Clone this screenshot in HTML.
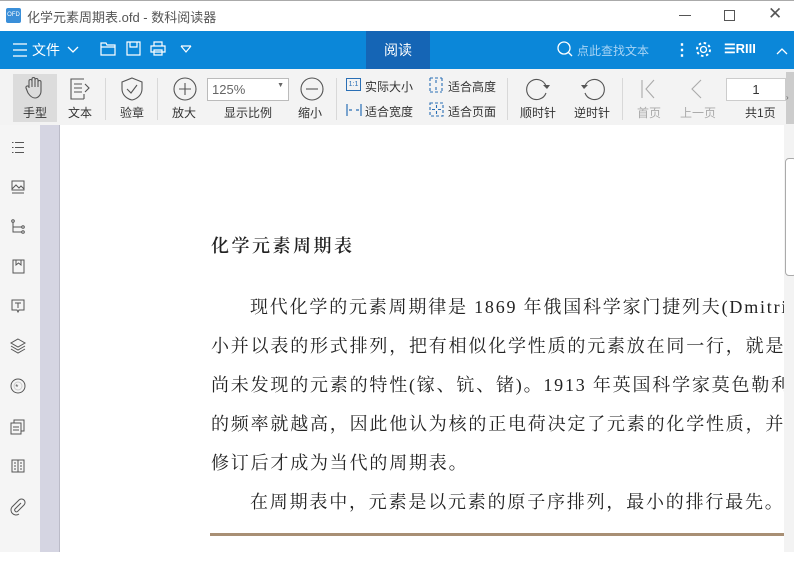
<!DOCTYPE html>
<html><head><meta charset="utf-8"><style>
*{margin:0;padding:0;box-sizing:border-box}
body{width:794px;height:574px;overflow:hidden;background:#fff;font-family:"Liberation Sans","Noto Sans CJK SC",sans-serif;position:relative;color:#333}
.abs{position:absolute}
.title{top:0;left:0;width:794px;height:31px;background:#fff;border-top:1px solid #aaa}
.blue{top:31px;left:0;width:794px;height:38px;background:#0b87d9;color:#fff}
.tb{top:69px;left:0;width:794px;height:56px;background:#f3f3f3}
.lbl{font-size:12px;color:#333;position:absolute;white-space:nowrap}
.sep{position:absolute;top:78px;width:1px;height:42px;background:#d8d8d8}
.side{top:125px;left:0;width:40px;height:427px;background:#f5f5f5}
.lav{top:125px;left:40px;width:20px;height:427px;background:#d5d5e2;border-right:1px solid #bbbbc8}
.page{top:125px;left:61px;width:723px;height:427px;background:#fff;overflow:hidden}
.txt{font-family:"Liberation Serif","Noto Serif CJK SC",serif;font-size:18px;letter-spacing:1.8px;color:#222;white-space:nowrap;position:absolute}
svg{position:absolute;overflow:visible}
</style></head><body>
<div class="abs title">
 <div class="abs" style="left:6px;top:7px;width:15px;height:15px;background:#3a8fd9;border-radius:2px;color:#fff;font-size:6px;line-height:15px;text-align:center">OFD</div>
 <div class="abs" style="left:27px;top:6px;font-size:13px;color:#555">化学元素周期表.ofd - 数科阅读器</div>
 <div class="abs" style="left:679px;top:14px;width:12px;height:1px;background:#555"></div>
 <div class="abs" style="left:724px;top:9px;width:11px;height:11px;border:1px solid #555"></div>
 <div class="abs" style="left:768px;top:3px;font-size:17px;color:#555">✕</div>
</div>
<div class="abs blue">
 <svg style="left:12px;top:12px" width="16" height="14"><path d="M1 1H15M1 7H15M1 13H15" stroke="#fff" stroke-width="1.3"/></svg>
 <div class="abs" style="left:32px;top:9px;font-size:14px">文件</div>
 <svg style="left:67px;top:15px" width="12" height="8"><path d="M1 1L6 6L11 1" stroke="#fff" fill="none" stroke-width="1.3"/></svg>
 <svg style="left:100px;top:10px" width="16" height="15"><path d="M1 2H6L7 4H15V14H1Z M1 6H15" stroke="#fff" fill="none" stroke-width="1.2"/></svg>
 <svg style="left:126px;top:10px" width="15" height="15"><path d="M1 1H14V14H1Z M4 1V6H11V1" stroke="#fff" fill="none" stroke-width="1.2"/></svg>
 <svg style="left:150px;top:10px" width="16" height="15"><path d="M4 5V1H12V5 M1 5H15V11H1Z M4 9H12V14H4Z" stroke="#fff" fill="none" stroke-width="1.2"/></svg>
 <svg style="left:180px;top:14px" width="12" height="9"><path d="M1 1L6 7L11 1 M1 1H11" stroke="#fff" fill="none" stroke-width="1.2"/></svg>
 <div class="abs" style="left:366px;top:0;width:64px;height:38px;background:#1565b5;font-size:14px;text-align:center;line-height:38px">阅读</div>
 <svg style="left:557px;top:10px" width="16" height="16"><circle cx="7" cy="7" r="6" stroke="#fff" fill="none" stroke-width="1.3"/><path d="M11 11L15 15" stroke="#fff" stroke-width="1.3"/></svg>
 <div class="abs" style="left:577px;top:11px;font-size:12px;color:#a8d4f5">点此查找文本</div>
 <div class="abs" style="left:674px;top:9px;font-size:16px;font-weight:bold">⋮</div>
 <svg style="left:695px;top:10px" width="17" height="17"><circle cx="8.5" cy="8.5" r="3" stroke="#fff" fill="none" stroke-width="1.3"/><circle cx="8.5" cy="8.5" r="6.5" stroke="#fff" fill="none" stroke-width="2" stroke-dasharray="2.5 2.6"/></svg>
 <div class="abs" style="left:724px;top:10px;font-size:13px;font-weight:bold">☰RIII</div>
 <svg style="left:776px;top:16px" width="12" height="8"><path d="M1 7L6 2L11 7" stroke="#fff" fill="none" stroke-width="1.3"/></svg>
</div>
<div class="abs tb">
 <div class="abs" style="left:13px;top:5px;width:44px;height:48px;background:#dcdcdc"></div>
</div>
<svg style="left:24px;top:76px" width="22" height="24"><path d="M5 12V5a1.5 1.5 0 013 0V11V3a1.5 1.5 0 013 0V11V4a1.5 1.5 0 013 0V11V6a1.5 1.5 0 013 0V15c0 4-3 7-6 7s-5-2-7-5L2 12a1.5 1.5 0 013-1" stroke="#555" fill="none" stroke-width="1.1"/></svg>
<div class="lbl" style="left:23px;top:104px">手型</div>
<svg style="left:70px;top:78px" width="22" height="22"><path d="M14 1H1V21H14 M14 16V21 M4 6H12M4 10H12M4 14H12 M15 6L19 10L15 14" stroke="#555" fill="none" stroke-width="1.1"/></svg>
<div class="lbl" style="left:68px;top:104px">文本</div>
<div class="sep" style="left:105px"></div>
<svg style="left:121px;top:77px" width="22" height="24"><path d="M11 1L21 5V12C21 18 16 22 11 23C6 22 1 18 1 12V5Z M6 12L10 16L16 8" stroke="#555" fill="none" stroke-width="1.1"/></svg>
<div class="lbl" style="left:120px;top:104px">验章</div>
<div class="sep" style="left:157px"></div>
<svg style="left:173px;top:77px" width="24" height="24"><circle cx="12" cy="12" r="11" stroke="#555" fill="none" stroke-width="1.1"/><path d="M12 6V18M6 12H18" stroke="#555" stroke-width="1.1"/></svg>
<div class="lbl" style="left:172px;top:104px">放大</div>
<div class="abs" style="left:207px;top:78px;width:82px;height:23px;background:#fff;border:1px solid #bbb;font-size:13px;color:#666;padding:3px 0 0 4px">125%<span style="position:absolute;right:4px;top:3px;font-size:7px">▼</span></div>
<div class="lbl" style="left:224px;top:104px">显示比例</div>
<svg style="left:300px;top:77px" width="24" height="24"><circle cx="12" cy="12" r="11" stroke="#555" fill="none" stroke-width="1.1"/><path d="M6 12H18" stroke="#555" stroke-width="1.1"/></svg>
<div class="lbl" style="left:298px;top:104px">缩小</div>
<div class="sep" style="left:336px"></div>
<div class="abs" style="left:346px;top:78px;width:15px;height:13px;border:1px solid #2a6fb5;font-size:7px;color:#2a6fb5;text-align:center;line-height:11px">1:1</div>
<div class="lbl" style="left:365px;top:78px">实际大小</div>
<svg style="left:346px;top:103px" width="16" height="14"><path d="M1 1V13M15 1V13 M3 7H6M10 7H13" stroke="#2a6fb5" stroke-width="1.2" fill="none"/></svg>
<div class="lbl" style="left:365px;top:103px">适合宽度</div>
<svg style="left:429px;top:77px" width="14" height="16"><path d="M1 1H13M1 15H13 M7 3V6M7 10V13 M1 1V15M13 1V15" stroke="#2a6fb5" stroke-width="1.1" fill="none" stroke-dasharray="3 2"/></svg>
<div class="lbl" style="left:448px;top:78px">适合高度</div>
<svg style="left:429px;top:102px" width="15" height="15"><path d="M1 1H14V14H1Z M7.5 3V6M7.5 9V12M3 7.5H6M9 7.5H12" stroke="#2a6fb5" stroke-width="1.1" fill="none" stroke-dasharray="3 2"/></svg>
<div class="lbl" style="left:448px;top:103px">适合页面</div>
<div class="sep" style="left:507px"></div>
<svg style="left:526px;top:77px" width="25" height="24"><path d="M20 9A10 10 0 1 0 20 16" stroke="#555" fill="none" stroke-width="1.1"/><path d="M17 8L21 12L24 8" fill="#555"/></svg>
<div class="lbl" style="left:520px;top:104px">顺时针</div>
<svg style="left:580px;top:77px" width="25" height="24"><path d="M5 9A10 10 0 1 1 5 16" stroke="#555" fill="none" stroke-width="1.1"/><path d="M1 8L4 12L8 8" fill="#555"/></svg>
<div class="lbl" style="left:574px;top:104px">逆时针</div>
<div class="sep" style="left:622px"></div>
<svg style="left:641px;top:79px" width="14" height="20"><path d="M1 1V19 M13 1L5 10L13 19" stroke="#aaa" fill="none" stroke-width="1.1"/></svg>
<div class="lbl" style="left:637px;top:104px;color:#aaa">首页</div>
<svg style="left:690px;top:79px" width="12" height="20"><path d="M11 1L2 10L11 19" stroke="#aaa" fill="none" stroke-width="1.1"/></svg>
<div class="lbl" style="left:680px;top:104px;color:#aaa">上一页</div>
<div class="abs" style="left:726px;top:78px;width:60px;height:23px;background:#fff;border:1px solid #ccc;font-size:13px;text-align:center;line-height:22px">1</div>
<div class="lbl" style="left:745px;top:104px">共1页</div>
<div class="abs" style="left:786px;top:72px;width:8px;height:52px;background:#ccc;font-size:8px;color:#666;line-height:52px">›</div>

<div class="abs side"></div>
<svg style="left:11px;top:141px" width="14" height="13"><path d="M4 1.5H13M4 6.5H13M4 11.5H13" stroke="#555" stroke-width="1"/><path d="M1 1h1.5v1h-1.5zM1 6h1.5v1h-1.5zM1 11h1.5v1h-1.5z" fill="#555"/></svg>
<svg style="left:11px;top:180px" width="14" height="14"><path d="M1 1H13V10H1Z M1 13H13 M1 9L5 5L8 8L10 6L13 9" stroke="#555" fill="none" stroke-width="1"/></svg>
<svg style="left:11px;top:219px" width="14" height="15"><circle cx="2" cy="2" r="1.3" stroke="#555" fill="none"/><path d="M2 3.5V13H11M2 8H11" stroke="#555" fill="none"/><circle cx="12" cy="8" r="1.3" stroke="#555" fill="none"/><circle cx="12" cy="13" r="1.3" stroke="#555" fill="none"/></svg>
<svg style="left:12px;top:259px" width="13" height="15"><path d="M1 1H12V14H1Z M4 1V6L6.5 4L9 6V1" stroke="#555" fill="none"/></svg>
<svg style="left:11px;top:299px" width="14" height="15"><path d="M1 1H13V11H8L7 13L6 11H1Z M4 4H10M7 4V9" stroke="#555" fill="none"/></svg>
<svg style="left:10px;top:338px" width="16" height="16"><path d="M8 1L15 5L8 9L1 5Z M1 8L8 12L15 8 M1 11L8 15L15 11" stroke="#555" fill="none"/></svg>
<svg style="left:10px;top:378px" width="16" height="16"><circle cx="8" cy="8" r="7" stroke="#555" fill="none"/><circle cx="8" cy="8" r="4" stroke="#ccc" fill="none"/><text x="5.2" y="12" font-size="8" fill="#555">*</text></svg>
<svg style="left:10px;top:418px" width="16" height="17"><path d="M1 5H11V16H1Z M4 5V2H14V13H11 M3 9H9M3 12H9" stroke="#555" fill="none"/></svg>
<svg style="left:11px;top:459px" width="14" height="14"><path d="M1 1H13V13H1Z M7 1V13 M3 4H5M3 7H5M3 10H5M9 4H11M9 7H11M9 10H11" stroke="#555" fill="none"/></svg>
<svg style="left:10px;top:498px" width="16" height="16"><path d="M11 5L5 11a1.8 1.8 0 0 0 2.5 2.5L14 7a3.5 3.5 0 0 0-5-5L2 9a5 5 0 0 0 7 7" stroke="#555" fill="none"/></svg>
<div class="abs lav"></div>
<div class="abs page">
 <div class="txt" style="left:150px;top:107px;font-weight:600;font-size:18px;letter-spacing:2.5px">化学元素周期表</div>
 <div class="txt" style="left:189px;top:168px">现代化学的元素周期律是 1869 年俄国科学家门捷列夫(Dmitri</div>
 <div class="txt" style="left:150px;top:207px">小并以表的形式排列，把有相似化学性质的元素放在同一行，就是</div>
 <div class="txt" style="left:150px;top:246px">尚未发现的元素的特性(镓、钪、锗)。1913 年英国科学家莫色勒利</div>
 <div class="txt" style="left:150px;top:285px">的频率就越高，因此他认为核的正电荷决定了元素的化学性质，并</div>
 <div class="txt" style="left:150px;top:324px">修订后才成为当代的周期表。</div>
 <div class="txt" style="left:189px;top:363px">在周期表中，元素是以元素的原子序排列，最小的排行最先。</div>
 <div class="abs" style="left:149px;top:408px;width:580px;height:3px;background:#a88f74"></div>
</div>
<div class="abs" style="left:784px;top:125px;width:10px;height:427px;background:#f3f3f3"></div>
<div class="abs" style="left:785px;top:158px;width:12px;height:118px;border:1px solid #aaa;border-radius:4px;background:#fff"></div>
</body></html>
